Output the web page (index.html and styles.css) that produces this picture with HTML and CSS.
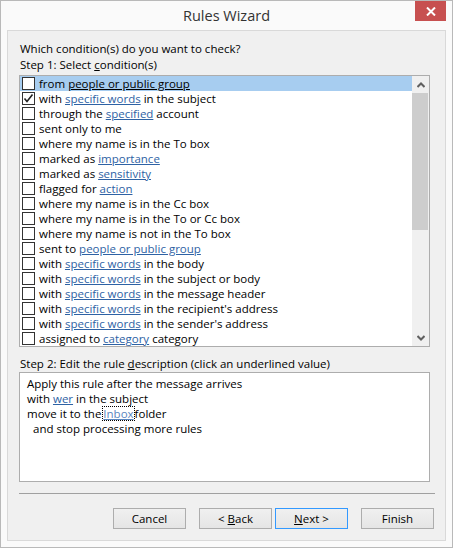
FILE: index.html
```html
<!DOCTYPE html>
<html>
<head>
<meta charset="utf-8">
<title>Rules Wizard</title>
<link rel="stylesheet" href="styles.css">
</head>
<body>
<div class="window">
  <div class="titlebar">
    <div class="spacer"></div>
    <div class="title">Rules Wizard</div>
    <div class="close-wrap">
      <div class="close">
        <svg width="10" height="9" viewBox="0 0 10 9"><path d="M1 0.5 L9 8.5 M9 0.5 L1 8.5" stroke="#fff" stroke-width="2" fill="none"/></svg>
      </div>
    </div>
  </div>
  <div class="client">
    <div class="label">Which condition(s) do you want to check?</div>
    <div class="label">Step 1: Select <u>c</u>ondition(s)</div>
    <div class="listbox">
      <div class="rows">
        <div class="row selected"><span class="cb"></span><span>from <a class="lk">people or public group</a></span></div>
        <div class="row"><span class="cb"><svg width="11" height="11" viewBox="0 0 11 11"><path d="M1.5 5.5 L4 8.5 L9.5 1.5" stroke="#222" stroke-width="1.6" fill="none"/></svg></span><span>with <a class="lk">specific words</a> in the subject</span></div>
        <div class="row"><span class="cb"></span><span>through the <a class="lk">specified</a> account</span></div>
        <div class="row"><span class="cb"></span><span>sent only to me</span></div>
        <div class="row"><span class="cb"></span><span>where my name is in the To box</span></div>
        <div class="row"><span class="cb"></span><span>marked as <a class="lk">importance</a></span></div>
        <div class="row"><span class="cb"></span><span>marked as <a class="lk">sensitivity</a></span></div>
        <div class="row"><span class="cb"></span><span>flagged for <a class="lk">action</a></span></div>
        <div class="row"><span class="cb"></span><span>where my name is in the Cc box</span></div>
        <div class="row"><span class="cb"></span><span>where my name is in the To or Cc box</span></div>
        <div class="row"><span class="cb"></span><span>where my name is not in the To box</span></div>
        <div class="row"><span class="cb"></span><span>sent to <a class="lk">people or public group</a></span></div>
        <div class="row"><span class="cb"></span><span>with <a class="lk">specific words</a> in the body</span></div>
        <div class="row"><span class="cb"></span><span>with <a class="lk">specific words</a> in the subject or body</span></div>
        <div class="row"><span class="cb"></span><span>with <a class="lk">specific words</a> in the message header</span></div>
        <div class="row"><span class="cb"></span><span>with <a class="lk">specific words</a> in the recipient's address</span></div>
        <div class="row"><span class="cb"></span><span>with <a class="lk">specific words</a> in the sender's address</span></div>
        <div class="row"><span class="cb"></span><span>assigned to <a class="lk">category</a> category</span></div>
      </div>
      <div class="scrollbar">
        <div class="arrow"><svg width="8" height="6" viewBox="0 0 8 6"><path d="M0.5 5 L4 1.5 L7.5 5" stroke="#606060" stroke-width="2" fill="none"/></svg></div>
        <div class="track"><div class="thumb"></div></div>
        <div class="arrow"><svg width="8" height="6" viewBox="0 0 8 6"><path d="M0.5 1 L4 4.5 L7.5 1" stroke="#606060" stroke-width="2" fill="none"/></svg></div>
      </div>
    </div>
    <div class="label step2">Step 2: Edit the rule <u>d</u>escription (click an underlined value)</div>
    <div class="desc">
      <div class="line">Apply this rule after the message arrives</div>
      <div class="line">with <a class="lk">wer</a> in the subject</div>
      <div class="line">move it to the<span class="focus"><a class="lk light">Inbox</a></span>folder</div>
      <div class="line indent">and stop processing more rules</div>
    </div>
    <div class="sep"></div>
    <div class="buttons">
      <button class="btn gap-l">Cancel</button>
      <button class="btn gap-s">&lt; <u>B</u>ack</button>
      <button class="btn default gap-l"><u>N</u>ext &gt;</button>
      <button class="btn">Finish</button>
    </div>
  </div>
</div>
</body>
</html>
```

FILE: styles.css
```css
* { box-sizing: border-box; }
html, body { margin: 0; padding: 0; }
body {
  width: 453px;
  height: 548px;
  font-family: "Open Sans", "Noto Sans", "Liberation Sans", sans-serif;
  font-size: 11.5px;
  color: #000;
  background: #fff;
}
.window {
  width: 453px;
  height: 548px;
  border: 1px solid #b9b9b9;
  background: #fafafa;
  padding: 0 6px 6px 6px;
  display: flex;
  flex-direction: column;
}
.titlebar {
  height: 29px;
  display: grid;
  grid-template-columns: 1fr auto 1fr;
  align-items: start;
}
.title {
  font-size: 14.5px;
  color: #333;
  line-height: 29px;
}
.close-wrap { display: flex; justify-content: flex-end; }
.close {
  width: 31px;
  height: 20px;
  background: #c75050;
  display: flex;
  align-items: center;
  justify-content: center;
}
.close svg { display: block; }
.client {
  flex: 1;
  border: 1px solid #d9d9d9;
  background: #f0f0f0;
  padding: 10px 15px 0 11px;
}
.label {
  line-height: 16px;
  height: 16px;
  white-space: nowrap;
  padding-left: 1px;
}
.listbox {
  margin-top: 2px;
  height: 272px;
  border: 1px solid #adadad;
  background: #fff;
  display: flex;
}
.rows { flex: 1; overflow: hidden; }
.row {
  height: 15px;
  display: flex;
  align-items: center;
  padding-left: 2px;
  white-space: nowrap;
  line-height: 15px;
}
.row.selected { background: #a7cdf0; }
.cb {
  width: 13px;
  height: 13px;
  border: 1px solid #333;
  background: #fff;
  margin-right: 4px;
  flex: none;
  display: flex;
  align-items: center;
  justify-content: center;
}
.cb svg { display: block; }
.lk {
  color: #2e62a4;
  text-decoration: underline;
}
.selected .lk { color: #000; }
.lk.light { color: #5a86c0; }
.scrollbar {
  width: 17px;
  background: #f0f0f0;
  display: flex;
  flex-direction: column;
}
.arrow {
  height: 17px;
  display: flex;
  align-items: center;
  justify-content: center;
}
.arrow svg { display: block; }
.track { flex: 1; }
.thumb {
  height: 137px;
  margin-right: 1px;
  background: #cdcdcd;
}
.step2 { margin-top: 9px; }
.desc {
  height: 110px;
  border: 1px solid #adadad;
  background: #fff;
  padding: 3px 0 0 7px;
}
.line {
  line-height: 15px;
  height: 15px;
  white-space: nowrap;
}
.indent { padding-left: 6px; }
.focus {
  outline: 1px dotted #000;
  outline-offset: -1px;
  padding: 0 1px;
  margin: 0 0 0 1px;
}
.sep {
  margin-top: 11px;
  margin-right: -5px;
  height: 1px;
  background: #a0a0a0;
}
.buttons {
  margin-top: 14px;
  margin-right: -4px;
  display: flex;
  justify-content: flex-end;
}
.btn {
  width: 73px;
  height: 21px;
  border: 1px solid #adadad;
  background: linear-gradient(#f0f0f0, #e5e5e5);
  font-family: inherit;
  font-size: 11.5px;
  color: #000;
  padding: 0;
  margin: 0;
  line-height: 19px;
}
.btn.default { border-color: #3399ff; }
.gap-l { margin-right: 13px; }
.gap-s { margin-right: 3px; }
```
